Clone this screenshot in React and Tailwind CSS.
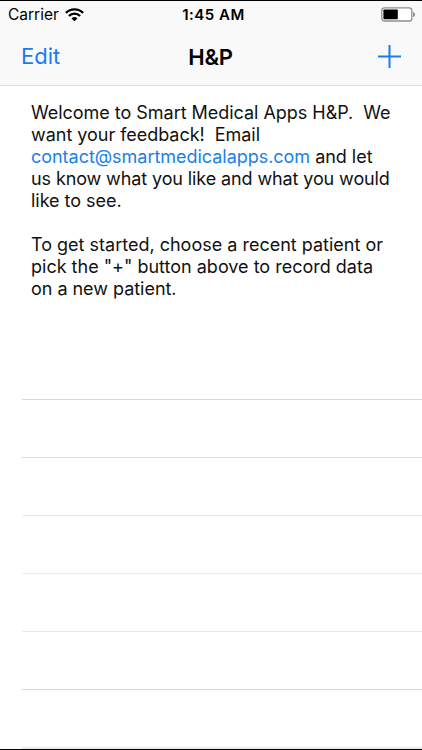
// The middle separators are drawn fainter than the others
const rows = [
  'border-[#d8d8d8]',
  'border-[#dadada]',
  'border-[#e8e8e8]',
  'border-[#ebebeb]',
  'border-[#e8e8e8]',
  'border-[#d8d8d8]',
];

const WifiIcon = () => (
  <svg width="19" height="14" viewBox="0 0 19 14" fill="none" stroke="#000" strokeWidth="2.3">
    <path d="M0.9 4.800a12.400 12.400 0 0 1 17.200 0" />
    <path d="M3.900 8a8 8 0 0 1 11.200 0" />
    <path d="M9.500 13.300L6.500 10.400a4.300 4.300 0 0 1 6 0z" fill="#000" stroke="none" />
  </svg>
);

const BatteryIcon = () => (
  <svg width="34" height="15" viewBox="0 0 34 15">
    <rect x="0.8" y="0.8" width="30" height="13.2" rx="2.6" fill="#fff" stroke="#8e8e8e" strokeWidth="1.3" />
    <rect x="2.4" y="2.500" width="14.400" height="9.800" rx="0.8" fill="#000" />
    <path d="M32 5v5c1.100-.3 2-1.200 2-2.500S33.100 5.300 32 5z" fill="#8e8e8e" />
  </svg>
);

const PlusIcon = () => (
  <svg width="23" height="23" viewBox="0 0 23 23" stroke="#1a7cf0" strokeWidth="2">
    <path d="M11.500 0v23M0 11.500h23" />
  </svg>
);

const StatusBar = () => (
  <div className="grid h-[27px] grid-cols-3 items-center text-black">
    <div className="flex items-center gap-[6px] pt-px pl-2">
      <span className="text-[15.500px]">Carrier</span>
      <WifiIcon />
    </div>
    <div className="pt-[2px] pl-[5px] text-center text-[15px] font-semibold tracking-[0.5px]">1:45 AM</div>
    <div className="flex justify-end pr-[7px]">
      <BatteryIcon />
    </div>
  </div>
);

const NavBar = () => (
  <div className="grid h-[57px] grid-cols-3 items-center">
    <button className="pl-[21px] text-left text-[22px] text-[#1a7cf0]">Edit</button>
    <h1 className="pt-px pr-px text-center text-[22px] font-semibold tracking-[-0.3px] text-black">H&amp;P</h1>
    <button className="flex justify-end pr-[21px]" aria-label="Add patient">
      <PlusIcon />
    </button>
  </div>
);

const App = () => {
  return (
    <div className="flex h-[750px] w-[422px] flex-col overflow-hidden border-y border-black bg-white font-['Inter','Liberation_Sans',sans-serif]">
      <header className="h-[85px] shrink-0 border-b border-[#dedede] bg-[#f9f9f9]">
        <StatusBar />
        <NavBar />
      </header>

      {/* Intro message */}
      <section className="h-[313px] shrink-0 whitespace-pre pt-[16px] pl-[31px] text-[18px] leading-[22px] tracking-[-0.030px] text-[#111]">
        <p>{'Welcome to Smart Medical Apps H&P.  We'}</p>
        <p>{'want your feedback!  Email'}</p>
        <p>
          <a className="text-[#1a80e8]">contact@smartmedicalapps.com</a> and let
        </p>
        <p className="tracking-[-0.110px]">us know what you like and what you would</p>
        <p>like to see.</p>
        <p className="pt-[22px] tracking-normal">To get started, choose a recent patient or</p>
        <p className="tracking-normal">pick the "+" button above to record data</p>
        <p>on a new patient.</p>
      </section>

      {/* Empty patient rows */}
      <ul className="ml-[22px]">
        {rows.map((border, i) => (
          <li key={i} className={`h-[58px] border-t ${border}`} />
        ))}
        <li className="h-[2px] bg-[#ececec]" />
      </ul>
    </div>
  );
};

export default App;
